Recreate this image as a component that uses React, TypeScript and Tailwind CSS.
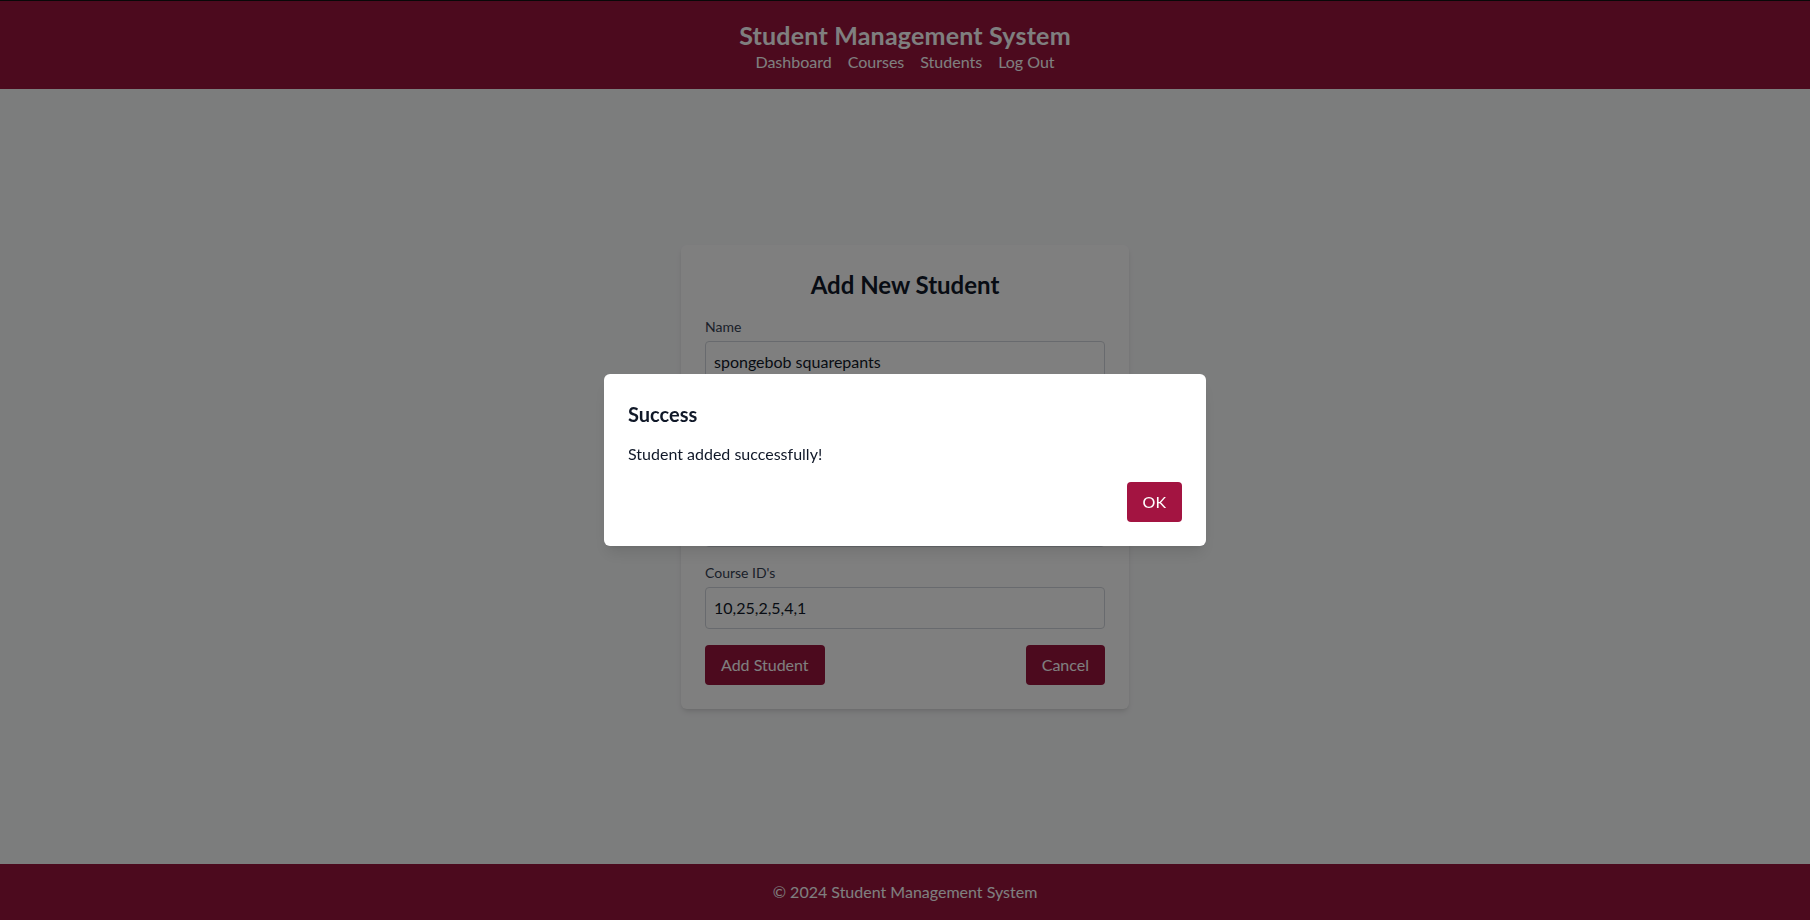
import React from 'react';

const FONT = "font-['Lato','Noto_Sans',sans-serif]";

function Field({ label, value }: { label: string; value: string }) {
  return (
    <div className="mb-4">
      <label className="block text-sm text-gray-700 mb-1">{label}</label>
      <input
        readOnly
        value={value}
        className="w-full h-[42px] px-2 border border-gray-300 rounded text-base text-gray-900 bg-white outline-none"
      />
    </div>
  );
}

function Header() {
  return (
    <header className="bg-[#98143c] text-white text-center pt-[18px] pb-[15px] border-t border-[#111]">
      <h1 className="text-[25px] font-bold leading-8 tracking-[0.2px]">Student Management System</h1>
      <nav className="flex justify-center text-base leading-6 -mt-[1px]">
        <a className="mx-2">Dashboard</a>
        <a className="mx-2">Courses</a>
        <a className="mx-2">Students</a>
        <a className="mx-2">Log Out</a>
      </nav>
    </header>
  );
}

function AddStudentForm() {
  return (
    <div className="w-[448px] bg-white rounded-md shadow-md p-6">
      <h2 className="text-2xl font-bold leading-8 text-center text-gray-900 mb-4">Add New Student</h2>
      <Field label="Name" value="spongebob squarepants" />
      <Field label="Email" value="spongebob@bikinibottom.com" />
      <Field label="Date of Birth" value="1986-07-14" />
      <Field label="Course ID's" value="10,25,2,5,4,1" />
      <div className="flex justify-between">
        <button className="bg-[#98143c] text-white px-4 py-2 rounded leading-6">Add Student</button>
        <button className="bg-[#98143c] text-white px-4 py-2 rounded leading-6">Cancel</button>
      </div>
    </div>
  );
}

function SuccessModal() {
  return (
    <div className="fixed inset-0 bg-black/50 flex items-center justify-center">
      <div className="w-[602px] bg-white rounded-md p-6 shadow-lg">
        <h3 className="text-xl font-bold leading-7 text-gray-900 pt-[2px]">Success</h3>
        <p className="text-base leading-6 text-gray-900 mt-[14px]">Student added successfully!</p>
        <div className="flex justify-end mt-4">
          <button className="bg-[#a31441] text-white px-4 py-2 rounded leading-6">OK</button>
        </div>
      </div>
    </div>
  );
}

export default function App() {
  return (
    <div className={`${FONT} min-h-screen flex flex-col bg-gray-50`}>
      <Header />
      <main className="flex-1 flex items-center justify-center">
        <AddStudentForm />
      </main>
      <footer className="bg-[#98143c] text-white text-center py-4 leading-6">
        © 2024 Student Management System
      </footer>
      <SuccessModal />
    </div>
  );
}
